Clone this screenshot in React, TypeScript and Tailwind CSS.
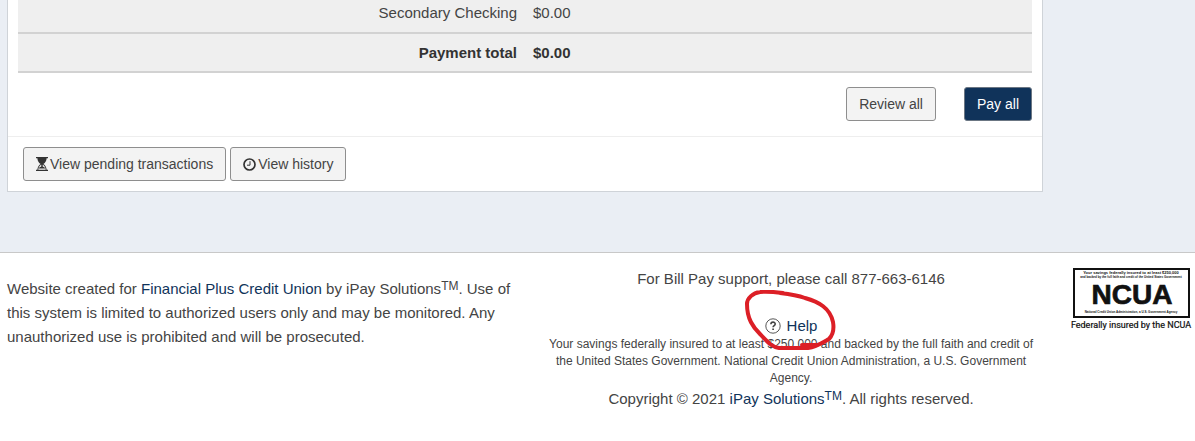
import type { ReactNode } from "react";

const rows = [
  { label: "Secondary Checking", value: "$0.00", total: false },
  { label: "Payment total", value: "$0.00", total: true },
];

const Btn = ({ children, primary = false }: { children: ReactNode; primary?: boolean }) => (
  <button
    type="button"
    className={
      primary
        ? "flex h-[34px] items-center rounded-[3px] border border-[#6b7683] bg-[#10335a] px-3 text-[14px] text-white"
        : "flex h-[34px] items-center rounded-[3px] border border-[#8e8e8e] bg-[#f3f3f3] px-3 text-[14px] text-[#444]"
    }
  >
    {children}
  </button>
);

const Hourglass = () => (
  <svg width="12" height="14" viewBox="0 0 12 14" fill="#333" aria-hidden="true">
    <path d="M0 0h12v1.300H0zM0 12.700h12V14H0z" />
    <path d="M1.400 1h9.200c0 3-1.300 4.600-3.200 6 1.900 1.400 3.200 3 3.200 6H9.700c0-2.400-1-4-2.700-5.200H5C3.300 9 2.300 10.600 2.300 13h-.9c0-3 1.300-4.600 3.200-6C2.700 5.600 1.400 4 1.400 1z" />
    <path d="M5.300 7h1.400v2.500c1.500.6 2.500 1.200 2.900 2H2.400c.4-.8 1.400-1.400 2.900-2z" />
  </svg>
);

const Clock = () => (
  <svg width="13" height="13" viewBox="0 0 13 13" fill="none" stroke="#333" aria-hidden="true">
    <circle cx="6.500" cy="6.500" r="5.500" strokeWidth="1.700" />
    <path d="M7 3.200v4H4" strokeWidth="1" />
  </svg>
);

const HelpIcon = () => (
  <svg width="16" height="16" viewBox="0 0 16 16" fill="none" stroke="#444" aria-hidden="true">
    <circle cx="8" cy="8" r="7.200" strokeWidth=".9" />
    <path d="M5.900 6.300c0-2.900 4.300-2.700 4.300-.3 0 1.600-2.100 1.500-2.100 3.200" strokeWidth="1.600" />
    <path d="M8.100 10.400v1.600" strokeWidth="1.700" />
  </svg>
);

// hand drawn ring around the help link
const Ring = () => (
  <svg
    className="pointer-events-none absolute -top-[26px] -left-[21px]"
    width="94"
    height="62"
    viewBox="0 0 94 62"
    fill="none"
    stroke="#dc1f26"
    strokeWidth="4"
    strokeLinecap="round"
    strokeLinejoin="round"
    aria-hidden="true"
  >
    <path d="M39 3C31 2 22 1 16 2 9 3 3 8 3 14c0 15 6 23 13 30 6 6 11 13 19 14h29c8-1 14-5 21-9 4-4 5-11 4-17C86 18 75 12 61 8 53 5 45 4 36 3" />
    <path d="M58 55h15" />
  </svg>
);

const NcuaLogo = () => (
  <svg width="121" height="65" viewBox="-2 0 121 65" role="img" aria-label="NCUA" fontFamily="Liberation Sans, Arial, sans-serif">
    <rect x="1" y="1" width="115" height="48" fill="#fff" stroke="#111" strokeWidth="2" />
    <g fill="#111" textAnchor="middle" fontWeight="700">
      <text x="58" y="6" fontSize="4">Your savings federally insured to at least $250,000</text>
      <text x="58" y="10" fontSize="3">and backed by the full faith and credit of the United States Government</text>
      <text x="59" y="36" fontSize="28" stroke="#111" strokeWidth=".7">NCUA</text>
      <text x="58" y="45" fontSize="3">National Credit Union Administration, a U.S. Government Agency</text>
    </g>
    <text x="58" y="60" fontSize="9" fill="#111" stroke="#111" strokeWidth=".2" textAnchor="middle" fontFamily="Roboto, sans-serif">
      Federally insured by the NCUA
    </text>
  </svg>
);

const Tm = () => <sup className="-top-1 text-[12px]">TM</sup>;

const App = () => {
  return (
    <div className="flex min-h-screen flex-col bg-[#eaeef4] font-['Liberation_Sans',Arial,sans-serif] text-[15px] text-[#444]">
      <main className="mr-[152px] mb-[60px] ml-[7px] border-x border-b border-[#cfd3d8] bg-white">
        <table className="mx-[10px] w-[calc(100%-20px)] table-fixed border-collapse bg-[#efefef]">
          <tbody>
            {rows.map((row) => (
              <tr
                key={row.label}
                className={
                  row.total
                    ? "h-[39px] border-b-2 border-[#d2d2d2] font-bold text-[#333]"
                    : "h-[33px] border-b-2 border-[#d2d2d2]"
                }
              >
                <th scope="row" className={row.total ? "px-2 pt-[2px] text-right font-bold" : "px-2 pb-[6px] text-right font-normal"}>
                  {row.label}
                </th>
                <td className={row.total ? "px-2 pt-[2px]" : "px-2 pb-[6px]"}>{row.value}</td>
              </tr>
            ))}
          </tbody>
        </table>
        <div className="flex justify-end gap-7 border-b border-[#eee] px-[10px] pt-[14px] pb-[15px]">
          <Btn>Review all</Btn>
          <Btn primary>Pay all</Btn>
        </div>
        <div className="flex gap-1 px-[15px] py-[10px]">
          <Btn>
            <Hourglass />
            <span className="ml-[2px]">View pending transactions</span>
          </Btn>
          <Btn>
            <Clock />
            <span className="ml-[2px]">View history</span>
          </Btn>
        </div>
      </main>

      <footer className="flex grow items-start border-t border-[#c8c8c8] bg-white">
        <p className="flex-1 pt-6 pr-7 pl-[7px] leading-6">
          Website created for{" "}
          <a href="#credit-union" className="text-[#10335a]">Financial Plus Credit Union</a> by iPay Solutions
          <Tm />. Use of this system is limited to authorized users only and may be monitored. Any
          unauthorized use is prohibited and will be prosecuted.
        </p>
        <div className="w-5/12 text-center">
          <p className="pt-4 leading-5">For Bill Pay support, please call 877-663-6146</p>
          <div className="mt-[27px] flex justify-center">
            <a href="#help" className="relative flex items-center gap-[6px] leading-5 text-[#10335a]">
              <HelpIcon />
              Help
              <Ring />
            </a>
          </div>
          <p className="text-[12px] leading-[17px]">
            Your savings federally insured to at least $250,000 and backed by the full faith and credit of the
            United States Government. National Credit Union Administration, a U.S. Government Agency.
          </p>
          <p className="leading-6">
            Copyright © 2021{" "}
            <a href="#ipay" className="text-[#10335a]">
              iPay Solutions
              <Tm />
            </a>
            . All rights reserved.
          </p>
        </div>
        <div className="flex w-[155px] justify-end pt-[15px] pr-[3px]">
          <NcuaLogo />
        </div>
      </footer>
    </div>
  );
};

export default App;
